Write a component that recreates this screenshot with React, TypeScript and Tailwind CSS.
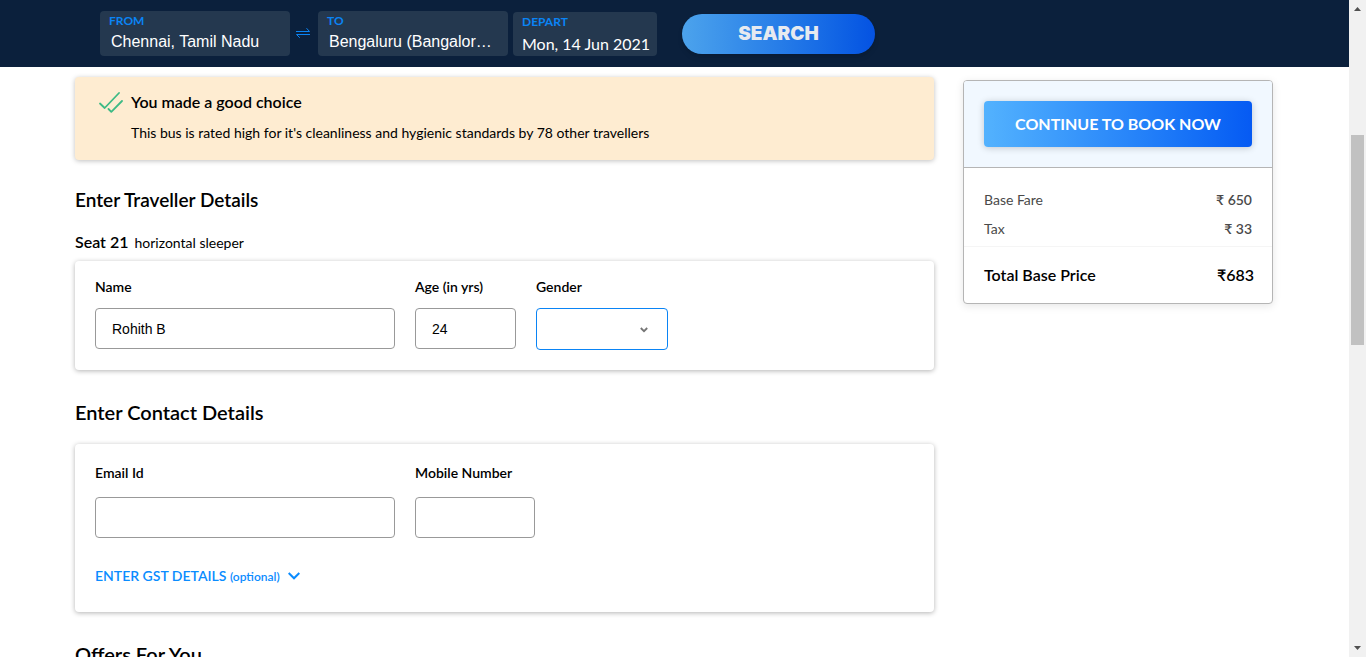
import type { ReactNode } from "react";

const fieldBox =
  "h-[41px] w-full rounded border border-[#999] bg-white px-4 font-['Liberation_Sans',sans-serif] text-sm text-black outline-none";

function Field({ id, label, className, children }: { id: string; label: string; className: string; children: ReactNode }) {
  return (
    <div className={className}>
      <label htmlFor={id} className="block text-sm leading-5 font-semibold">
        {label}
      </label>
      {children}
    </div>
  );
}

function SwapIcon() {
  return (
    <svg viewBox="0 0 14 12" className="h-3 w-3.5" fill="none" stroke="#0a84f5" strokeWidth="1">
      <path d="M0 4.5H13.5L10.5 1.2M14 7.5H0.5L3.8 10.8" />
    </svg>
  );
}

function DoubleTick() {
  return (
    <svg viewBox="0 0 24 21" className="h-[21px] w-6 shrink-0" fill="none" stroke="#3dba85" strokeWidth="1.8" strokeLinecap="round" strokeLinejoin="round">
      <path d="M1 11.5L5.7 16L20 1M9.5 17L12.3 19.8L23 9" />
    </svg>
  );
}

function Header() {
  return (
    <header className="flex h-[67px] shrink-0 items-start bg-[#0b203c] pt-[11px] pl-[100px]">
      <label className="flex h-[45px] w-[190px] flex-col rounded bg-[#24384f] pt-1 pl-[9px]">
        <span className="text-xs leading-3 font-bold text-[#0a84f5]">FROM</span>
        <input
          defaultValue="Chennai, Tamil Nadu"
          className="mt-[5px] ml-0.5 h-5 w-[168px] bg-transparent font-['Liberation_Sans',sans-serif] text-base leading-5 text-white outline-none"
        />
      </label>
      <button aria-label="Swap" className="flex h-11 w-[26px] items-center justify-center">
        <SwapIcon />
      </button>
      <label className="ml-0.5 flex h-[45px] w-[190px] flex-col rounded bg-[#24384f] pt-1 pl-[9px]">
        <span className="text-xs leading-3 font-bold text-[#0a84f5]">TO</span>
        <input
          defaultValue="Bengaluru (Bangalore), Karnataka"
          className="mt-[5px] ml-0.5 h-5 w-[168px] bg-transparent font-['Liberation_Sans',sans-serif] text-base leading-5 text-ellipsis text-white outline-none"
        />
      </label>
      <button className="mt-px ml-[5px] flex h-11 w-36 flex-col items-start rounded bg-[#24384f] pt-1 pl-[9px]">
        <span className="text-xs leading-3 font-bold text-[#0a84f5]">DEPART</span>
        <span className="mt-1.5 text-base leading-5 whitespace-nowrap text-white">Mon, 14 Jun 2021</span>
      </button>
      <button className="mt-[3px] ml-[25px] h-10 w-[193px] rounded-full bg-linear-to-r from-[#4ca3ec] to-[#0552e2] font-['Inter',sans-serif] text-[19px] font-black text-[#e6eaf0] shadow-md">
        SEARCH
      </button>
    </header>
  );
}

const card = "rounded bg-white shadow-[0_1px_5px_rgba(0,0,0,0.3)]";

function Fare({ label, value }: { label: string; value: string }) {
  return (
    <div className="flex justify-between text-sm leading-[29px] text-[#4a4a4a]">
      <dt>{label}</dt>
      <dd className="font-semibold">{value}</dd>
    </div>
  );
}

function Summary() {
  return (
    <aside className="mt-[13px] self-start overflow-hidden rounded border border-[#b5b5b5] bg-white shadow-[0_2px_8px_rgba(0,0,0,0.1)]">
      <div className="border-b border-[#b5b5b5] bg-[#f1f8ff] p-5">
        <button className="h-[46px] w-full rounded bg-linear-to-r from-[#53b2fe] to-[#065af3] text-base font-bold whitespace-nowrap text-white shadow-[0_1px_7px_rgba(0,0,0,0.2)]">
          CONTINUE TO BOOK NOW
        </button>
      </div>
      <dl>
        <div className="border-b border-[#f5f5f5] px-5 pt-[17px] pb-[3px]">
          <Fare label="Base Fare" value="₹ 650" />
          <Fare label="Tax" value="₹ 33" />
        </div>
        <div className="flex h-14 items-center justify-between pr-[18px] pl-5 text-base font-semibold">
          <dt>Total Base Price</dt>
          <dd>₹683</dd>
        </div>
      </dl>
    </aside>
  );
}

function Scrollbar() {
  return (
    <div aria-hidden="true" className="flex w-[17px] shrink-0 flex-col items-center bg-[#f1f1f1]">
      <svg viewBox="0 0 17 17" className="h-[17px] w-[17px] shrink-0" fill="#505050">
        <path d="M5 11L8.5 7L12 11Z" />
      </svg>
      <div className="mt-[118px] h-[210px] w-[13px] bg-[#c1c1c1]" />
      <svg viewBox="0 0 17 17" className="mt-auto h-[17px] w-[17px] shrink-0" fill="#505050">
        <path d="M5 6L8.5 10L12 6Z" />
      </svg>
    </div>
  );
}

export default function App() {
  return (
    <div className="flex h-screen overflow-hidden bg-white font-['Lato',sans-serif] text-black">
      <div className="flex min-w-0 flex-1 flex-col overflow-hidden">
        <Header />
        <div className="mx-auto grid w-full max-w-[1349px] grid-cols-[minmax(0,1fr)_310px] gap-[29px] pr-[76px] pl-[75px]">
          <main className="pt-[10px]">
            <section className="flex h-[83px] gap-2 rounded bg-[#feecd1] pt-[15px] pl-6 shadow-[0_1px_5px_rgba(0,0,0,0.25)]">
              <DoubleTick />
              <div>
                <h2 className="text-base leading-5 font-semibold">You made a good choice</h2>
                <p className="mt-[11px] text-sm leading-5">
                  This bus is rated high for it's cleanliness and hygienic standards by 78 other travellers
                </p>
              </div>
            </section>

            <h2 className="mt-7 text-[19px] leading-6 font-semibold">Enter Traveller Details</h2>
            <p className="mt-5 text-sm leading-5">
              <span className="mr-1.5 text-base leading-5 font-semibold">Seat 21</span>
              horizontal sleeper
            </p>
            <section className={card + " mt-2 flex h-[109px] gap-5 px-5 pt-4"}>
              <Field id="name" label="Name" className="w-[300px]">
                <input id="name" defaultValue="Rohith B" className={fieldBox + " mt-[11px]"} />
              </Field>
              <Field id="age" label="Age (in yrs)" className="w-[101px]">
                <input id="age" defaultValue="24" className={fieldBox + " mt-[11px]"} />
              </Field>
              <Field id="gender" label="Gender" className="w-[132px]">
                <div className="relative mt-[11px]">
                  <select
                    id="gender"
                    defaultValue=""
                    className="block h-[42px] w-full appearance-none rounded border border-[#0a84f5] bg-white px-4 text-sm outline-none"
                  >
                    <option value=""></option>
                    <option>Male</option>
                    <option>Female</option>
                  </select>
                  <svg viewBox="0 0 8 6" className="pointer-events-none absolute top-[19px] right-5 h-1.5 w-2" fill="none" stroke="#757575" strokeWidth="1.8">
                    <path d="M0.8 1L4 4.2L7.2 1" />
                  </svg>
                </div>
              </Field>
            </section>

            <h2 className="mt-[30px] text-xl leading-6 font-semibold">Enter Contact Details</h2>
            <section className={card + " mt-5 h-[168px] px-5 pt-[19px]"}>
              <div className="flex gap-5">
                <Field id="email" label="Email Id" className="w-[300px]">
                  <input id="email" type="email" className={fieldBox + " mt-[14px]"} />
                </Field>
                <Field id="mobile" label="Mobile Number" className="w-[120px]">
                  <input id="mobile" type="tel" className={fieldBox + " mt-[14px]"} />
                </Field>
              </div>
              <button className="mt-7 flex items-center text-sm leading-5 font-semibold text-[#0a8cff]">
                <span>
                  ENTER GST DETAILS <span className="text-xs">(optional)</span>
                </span>
                <svg viewBox="0 0 12 8" className="ml-2 h-2 w-3" fill="none" stroke="currentColor" strokeWidth="2">
                  <path d="M0.7 1L6 6.3L11.3 1" />
                </svg>
              </button>
            </section>

            <h2 className="mt-[30px] text-xl leading-6 font-semibold">Offers For You</h2>
          </main>
          <Summary />
        </div>
      </div>
      <Scrollbar />
    </div>
  );
}
